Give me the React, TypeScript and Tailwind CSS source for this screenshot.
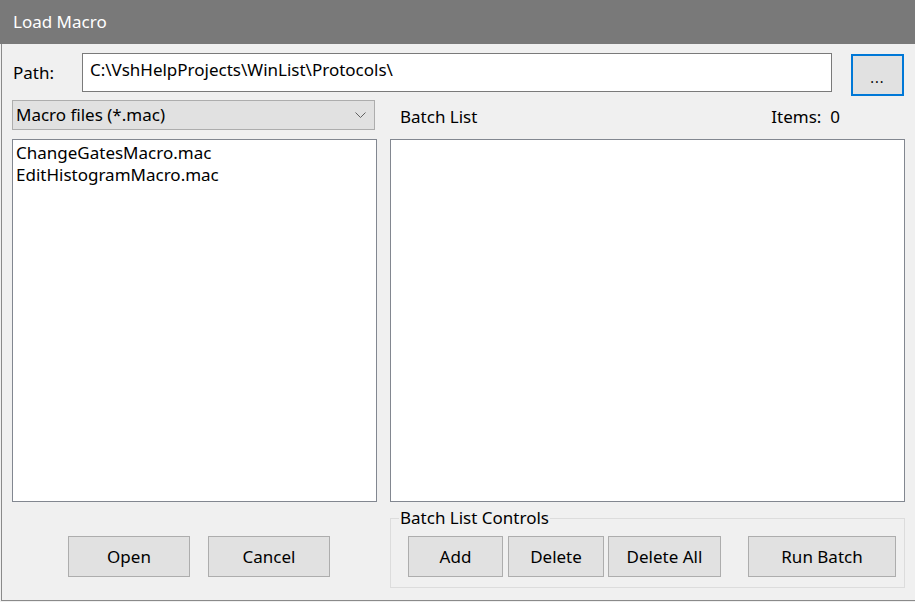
import React from 'react';

const font = { fontFamily: '"Noto Sans", "Open Sans", sans-serif' };

const files = ['ChangeGatesMacro.mac', 'EditHistogramMacro.mac'];

const Button: React.FC<{ label: string; className: string }> = ({ label, className }) => (
  <button
    className={`h-[41px] border border-[#adadad] bg-[#e1e1e1] text-[17px] text-black flex items-center justify-center ${className}`}
  >
    {label}
  </button>
);

export default function App() {
  return (
    <div className="w-[915px] h-[602px] bg-[#f0f0f0] flex flex-col text-black" style={font}>
      <div className="h-[44px] bg-[#797979] text-white text-[17px] flex items-center pl-[13px] pb-[1px]">
        Load Macro
      </div>

      <div className="ml-[1px] h-[557px] border-l border-b border-[#8a8a8a] pl-[10px] pt-[9px] flex flex-col">
        {/* path row */}
        <div className="flex items-start h-[43px]">
          <div className="w-[70px] h-[39px] flex items-center pl-[1px] text-[17px]">Path:</div>
          <div className="w-[750px] h-[39px] bg-white border border-[#7a7a7a] flex items-center pl-[7px] pb-[5px] text-[17px]">
            C:\VshHelpProjects\WinList\Protocols\
          </div>
          <button className="ml-[19px] mt-[1px] w-[53px] h-[42px] border-2 border-[#0078d7] bg-[#e1e1e1] flex items-center justify-center pt-[6px] text-[14px] leading-none tracking-[1px]">
            ...
          </button>
        </div>

        {/* filter row */}
        <div className="mt-[4px] flex items-center h-[30px]">
          <div className="w-[363px] h-[30px] border border-[#adadad] bg-[#e1e1e1] flex items-center justify-between pl-[3px] pr-[8px] text-[17px]">
            <span>Macro files (*.mac)</span>
            <svg width="11" height="7" viewBox="0 0 11 7" fill="none">
              <path d="M0.5 0.5 L5.5 5.5 L10.5 0.5" stroke="#606060" strokeWidth="1" />
            </svg>
          </div>
          <div className="ml-[25px] w-[440px] flex items-center justify-between pt-[4px] text-[17px]">
            <span>Batch List</span>
            <span>Items:&nbsp; 0</span>
          </div>
        </div>

        {/* lists */}
        <div className="mt-[9px] flex gap-[13px]">
          <div className="w-[365px] h-[363px] bg-white border border-[#828790] pl-[3px] pt-[2px] text-[17px] leading-[22px]">
            {files.map((f) => (
              <div key={f}>{f}</div>
            ))}
          </div>
          <div className="w-[515px] h-[363px] bg-white border border-[#828790]" />
        </div>

        {/* bottom */}
        <div className="flex items-start gap-[13px]">
          <div className="w-[365px] pt-[34px] pl-[56px] flex gap-[18px]">
            <Button label="Open" className="w-[122px]" />
            <Button label="Cancel" className="w-[122px]" />
          </div>
          <div className="relative mt-[16px] w-[515px] h-[70px] border border-[#dcdcdc] pl-[17px] pt-[17px] flex">
            <span className="absolute -top-[13px] left-[8px] bg-[#f0f0f0] px-[1px] text-[17px] leading-[24px]">
              Batch List Controls
            </span>
            <Button label="Add" className="w-[95px]" />
            <Button label="Delete" className="ml-[5px] w-[96px]" />
            <Button label="Delete All" className="ml-[4px] w-[113px]" />
            <Button label="Run Batch" className="ml-[27px] w-[148px]" />
          </div>
        </div>
      </div>
    </div>
  );
}
